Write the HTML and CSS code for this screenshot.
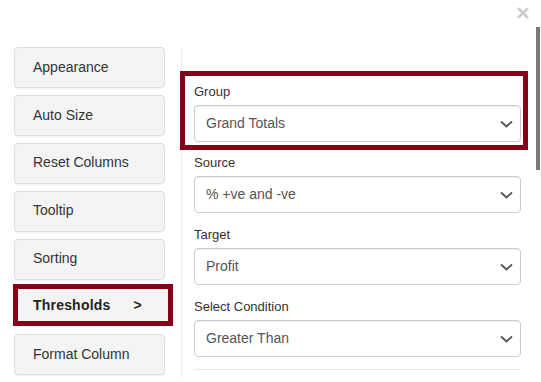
FILE: index.html
```html
<!DOCTYPE html>
<html lang="en">
	<head>
		<meta charset="UTF-8" />
		<meta name="viewport" content="initial-scale=1,width=device-width" />
		<title>Column Settings</title>
		<link rel="stylesheet" href="styles.css">
	</head>

	<body>
		<div class="dialog">
			<header class="dialog-header">
				<button class="dialog-close" type="button" aria-label="Close">
					<svg width="12" height="12" viewBox="0 0 12 12">
						<path d="M2 2 L10 10 M10 2 L2 10" stroke="currentColor" stroke-width="2.6" stroke-linecap="square" fill="none" />
					</svg>
				</button>
			</header>
			<div class="dialog-body">
				<nav class="settings-nav">
					<div class="settings-nav__item">Appearance</div>
					<div class="settings-nav__item">Auto Size</div>
					<div class="settings-nav__item">Reset Columns</div>
					<div class="settings-nav__item">Tooltip</div>
					<div class="settings-nav__item">Sorting</div>
					<div class="settings-nav__item settings-nav__item_active">
						<span>Thresholds</span>
						<span class="settings-nav__arrow">&gt;</span>
					</div>
					<div class="settings-nav__item">Format Column</div>
				</nav>
				<section class="settings-panel">
					<div class="field field_highlighted">
						<div class="field__label">Group</div>
						<div class="select">
							<span>Grand Totals</span>
							<svg class="select__chevron" width="13" height="8" viewBox="0 0 13 8"><path d="M1 1.5 L6.5 6.5 L12 1.5" stroke="currentColor" stroke-width="1.8" fill="none" /></svg>
						</div>
					</div>
					<div class="field">
						<div class="field__label">Source</div>
						<div class="select">
							<span>% +ve and -ve</span>
							<svg class="select__chevron" width="13" height="8" viewBox="0 0 13 8"><path d="M1 1.5 L6.5 6.5 L12 1.5" stroke="currentColor" stroke-width="1.8" fill="none" /></svg>
						</div>
					</div>
					<div class="field">
						<div class="field__label">Target</div>
						<div class="select">
							<span>Profit</span>
							<svg class="select__chevron" width="13" height="8" viewBox="0 0 13 8"><path d="M1 1.5 L6.5 6.5 L12 1.5" stroke="currentColor" stroke-width="1.8" fill="none" /></svg>
						</div>
					</div>
					<div class="field">
						<div class="field__label">Select Condition</div>
						<div class="select">
							<span>Greater Than</span>
							<svg class="select__chevron" width="13" height="8" viewBox="0 0 13 8"><path d="M1 1.5 L6.5 6.5 L12 1.5" stroke="currentColor" stroke-width="1.8" fill="none" /></svg>
						</div>
					</div>
					<hr class="settings-panel__rule" />
				</section>
			</div>
			<div class="dialog-scrollbar"></div>
		</div>
	</body>
</html>
```

FILE: styles.css
```css
html {
	box-sizing: border-box;
}

*,
*::after,
*::before {
	box-sizing: inherit;
}

body {
	padding: 0;
	margin: 0;
	font-family: "Liberation Sans", Arial, sans-serif;
	font-size: 14px;
	line-height: 1.4;
	color: #333;
	background-color: #fff;
	overflow: hidden;
}

.dialog {
	position: relative;
	width: 541px;
	height: 382px;
	overflow: hidden;
}

.dialog-header {
	display: flex;
	justify-content: flex-end;
	align-items: flex-start;
	height: 47px;
	padding: 7px 12px 0 0;
}

.dialog-close {
	display: block;
	padding: 0;
	border: 0;
	background: none;
	color: #cbcbcb;
	line-height: 0;
}

.dialog-body {
	display: flex;
	align-items: flex-start;
}

.settings-nav {
	display: flex;
	flex-direction: column;
	gap: 6.9px;
	width: 181px;
	padding: 0 16px 0 14px;
	flex-shrink: 0;
}

.settings-nav__item {
	display: flex;
	align-items: center;
	height: 41px;
	padding-left: 18px;
	background-color: #f4f4f4;
	border: 1px solid #dedede;
	border-radius: 4px;
	box-shadow: 0 1px 1px rgb(0 0 0 / 5%);
	font-size: 14px;
}

.settings-nav__item_active {
	justify-content: space-between;
	width: 160px;
	height: 42px;
	margin: -2px 0 1px -1px;
	padding: 0 26px 0 15px;
	border: 5px solid #86001a;
	border-radius: 0;
	box-shadow: none;
	font-weight: 700;
	color: #222;
	letter-spacing: 0.2px;
}

.settings-panel {
	flex-grow: 1;
	min-height: 331px;
	padding: 24px 20px 8px 12px;
	border-left: 1px solid #ececec;
}

.field {
	margin-top: 14px;
}

.field_highlighted {
	margin: 0 -7px 5px -14px;
	padding: 8px 2px 3px 9px;
	border: 5px solid #86001a;
}

.field_highlighted + .field {
	margin-top: 0;
}

.field__label {
	margin-bottom: 5px;
	font-size: 13px;
	line-height: 16px;
	color: #333;
}

.select {
	display: flex;
	align-items: center;
	justify-content: space-between;
	height: 37px;
	padding: 0 7px 0 11px;
	background-color: #fff;
	border: 1px solid #cccccc;
	border-radius: 4px;
	box-shadow: inset 0 1px 1px rgb(0 0 0 / 7%);
	font-size: 14px;
	color: #555;
}

.select__chevron {
	color: #555;
}

.settings-panel__rule {
	height: 1px;
	margin: 12px 0 0;
	border: 0;
	background-color: #e8e8e8;
}

.dialog-scrollbar {
	position: absolute;
	top: 27px;
	right: 1px;
	width: 4px;
	height: 143px;
	background-color: #7a7a7a;
}
```
